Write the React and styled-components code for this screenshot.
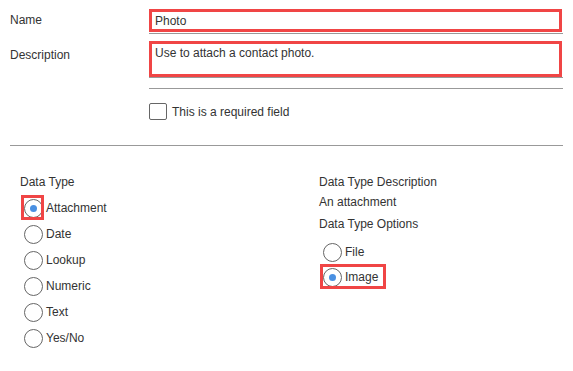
import React from "react";
import styled, { createGlobalStyle } from "styled-components";

const Global = createGlobalStyle`
  html, body { margin: 0; padding: 0; background: #fff; }
  body { font-family: "Liberation Sans", Arial, sans-serif; font-size: 12px; color: #333; }
`;

const Page = styled.div`
  width: 573px;
  height: 371px;
  padding: 9px 10px 0 10px;
  box-sizing: border-box;
`;

const FormGrid = styled.div`
  display: grid;
  grid-template-columns: 139px 414px;
  row-gap: 7px;
`;

const Label = styled.div`
  padding-top: ${(p) => p.$top || 5}px;
  line-height: 14px;
`;

const Field = styled.div`
  position: relative;
  height: ${(p) => p.$h}px;
  border-bottom: 1px solid #999;
  box-sizing: border-box;
`;

const Highlight = styled.div`
  position: absolute;
  left: 0;
  top: 0;
  right: 1px;
  bottom: ${(p) => p.$b || 0}px;
  border: 3px solid #f04545;
  padding: 2px 3px;
  line-height: 14px;
`;

const Rule = styled.div`
  grid-column: 2;
  height: 1px;
  background: #999;
  margin-top: 3px;
`;

const CheckRow = styled.label`
  grid-column: 2;
  display: flex;
  align-items: center;
  gap: 5px;
  margin-top: 7px;
`;

const Box = styled.span`
  width: 16px;
  height: 15px;
  border: 1px solid #666;
  border-radius: 2px;
  display: inline-block;
`;

const Divider = styled.div`
  height: 1px;
  background: #999;
  margin-top: 25px;
`;

const Columns = styled.div`
  display: grid;
  grid-template-columns: 299px 1fr;
  margin-top: 29px;
  padding-left: 10px;
`;

const Col = styled.div`
  display: flex;
  flex-direction: column;
`;

const Heading = styled.div`
  line-height: 14px;
  margin-bottom: ${(p) => p.$mb || 0}px;
`;

const RadioList = styled.div`
  display: flex;
  flex-direction: column;
  gap: ${(p) => p.$gap || 8}px;
`;

const RadioRow = styled.div`
  display: flex;
  align-items: center;
  height: 18px;
  position: relative;
  margin-left: 4px;
`;

const Circle = styled.span`
  width: 17px;
  height: 17px;
  border: 1px solid #666;
  border-radius: 50%;
  display: flex;
  align-items: center;
  justify-content: center;
  margin-right: 3px;
  flex: none;
  &::after {
    content: "";
    width: 7px;
    height: 7px;
    border-radius: 50%;
    background: ${(p) => (p.$on ? "#4a90e2" : "transparent")};
  }
`;

const Mark = styled.span`
  position: absolute;
  left: -3px;
  top: -4px;
  width: ${(p) => p.$w}px;
  height: 25px;
  border: 3px solid #f04545;
  box-sizing: border-box;
`;

function Radio({ label, on, mark }) {
  return (
    <RadioRow>
      {mark ? <Mark $w={mark} /> : null}
      <Circle $on={on} />
      {label}
    </RadioRow>
  );
}

export default function App() {
  return (
    <Page>
      <Global />
      <FormGrid>
        <Label $top={4}>Name</Label>
        <Field $h={25}>
          <Highlight $b={1}>Photo</Highlight>
        </Field>
        <Label $top={7}>Description</Label>
        <Field $h={37}>
          <Highlight>Use to attach a contact photo.</Highlight>
        </Field>
        <Rule />
        <CheckRow>
          <Box />
          This is a required field
        </CheckRow>
      </FormGrid>
      <Divider />
      <Columns>
        <Col>
          <Heading $mb={10}>Data Type</Heading>
          <RadioList>
            <Radio label="Attachment" on mark={23} />
            <Radio label="Date" />
            <Radio label="Lookup" />
            <Radio label="Numeric" />
            <Radio label="Text" />
            <Radio label="Yes/No" />
          </RadioList>
        </Col>
        <Col>
          <Heading $mb={6}>Data Type Description</Heading>
          <Heading $mb={8}>An attachment</Heading>
          <Heading $mb={12}>Data Type Options</Heading>
          <RadioList $gap={7}>
            <Radio label="File" />
            <Radio label="Image" on mark={66} />
          </RadioList>
        </Col>
      </Columns>
    </Page>
  );
}
